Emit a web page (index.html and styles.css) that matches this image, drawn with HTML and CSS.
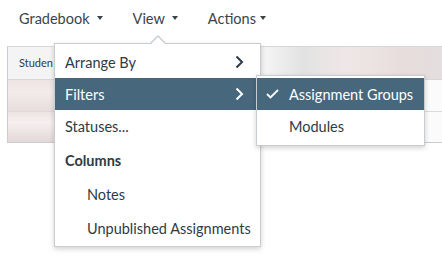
FILE: index.html
```html
<!DOCTYPE html>
<html lang="en">
<head>
    <meta charset="UTF-8">
    <title>Gradebook</title>
    <link rel="stylesheet" href="styles.css">
</head>
<body>
    <div class="page">
        <nav class="toolbar">
            <span class="tool">Gradebook <span class="caret"></span></span>
            <span class="tool">View <span class="caret"></span></span>
            <span class="tool tool-tight">Actions <span class="caret"></span></span>
        </nav>

        <!-- Gradebook grid (blurred behind the menu) -->
        <div class="grid">
            <div class="grid-head">
                <div class="cell-student">Studen</div>
                <div class="cell-blur"></div>
            </div>
            <div class="grid-row">
                <div class="cell-name"></div>
                <div class="cell-rest"></div>
            </div>
            <div class="grid-row">
                <div class="cell-name"></div>
                <div class="cell-rest"></div>
            </div>
        </div>

        <!-- View menu -->
        <div class="menu view-menu">
            <div class="menu-item">Arrange By
                <svg class="chev" width="9" height="14" viewBox="0 0 9 14"><polyline points="1.5,1.5 7,7 1.5,12.5" fill="none" stroke="currentColor" stroke-width="2"/></svg>
            </div>
            <div class="menu-item active">Filters
                <svg class="chev" width="9" height="14" viewBox="0 0 9 14"><polyline points="1.5,1.5 7,7 1.5,12.5" fill="none" stroke="currentColor" stroke-width="2"/></svg>
            </div>
            <div class="menu-item">Statuses...</div>
            <div class="menu-item group-label">Columns</div>
            <div class="menu-item indent">Notes</div>
            <div class="menu-item indent">Unpublished Assignments</div>
        </div>

        <!-- Filters submenu -->
        <div class="menu sub-menu">
            <div class="menu-item active">
                <svg class="check" width="13" height="10" viewBox="0 0 13 10"><polyline points="1,5 4.5,8.5 12,1" fill="none" stroke="currentColor" stroke-width="1.8"/></svg>
                Assignment Groups
            </div>
            <div class="menu-item">Modules</div>
        </div>
    </div>
</body>
</html>
```

FILE: styles.css
```css
* {
    margin: 0;
    padding: 0;
    box-sizing: border-box;
}

body {
    font-family: 'Lato', 'Open Sans', sans-serif;
    color: #2d3b45;
    background: #ffffff;
    width: 442px;
    height: 256px;
    overflow: hidden;
}

.page {
    position: relative;
    height: 256px;
}

/* Top toolbar */
.toolbar {
    display: flex;
    align-items: center;
    height: 46px;
    padding: 0 0 10px 19px;
    font-size: 14.5px;
    color: #3a444c;
    gap: 30px;
}

.tool {
    display: inline-flex;
    align-items: center;
}

.caret {
    display: inline-block;
    margin-left: 7px;
    border-left: 3px solid transparent;
    border-right: 3px solid transparent;
    border-top: 4px solid #3a444c;
}

.tool-tight .caret {
    margin-left: 4px;
}

/* Grid */
.grid {
    margin-left: 7px;
    border-top: 1px solid #d4d8db;
    border-left: 1px solid #c7cdd1;
    border-bottom: 1px solid #c7cdd1;
}

.grid-head {
    display: flex;
    height: 33px;
    border-bottom: 1px solid #d4d8db;
}

.cell-student {
    width: 48px;
    background: #f4f4f4;
    font-size: 11px;
    line-height: 32px;
    padding-left: 11px;
    white-space: nowrap;
    overflow: hidden;
    color: #2d3b45;
}

.cell-blur {
    flex: 1;
    background: linear-gradient(90deg, #e6dcdc 0%, #eee6e6 40%, #f3f3f3 55%, #e2e2e2 64%, #efe7e7 75%, #e8dddd 90%, #e4dede 100%);
}

.grid-row {
    display: flex;
    height: 31px;
}

.grid-row + .grid-row {
    border-top: 1px solid #d9dcde;
}

.cell-name {
    width: 48px;
    background: linear-gradient(180deg, #efe4e4 0%, #f3eaea 40%, #e9dede 100%);
}

.grid-row + .grid-row .cell-name {
    background: linear-gradient(180deg, #eee3e3 0%, #f6efef 35%, #e4d8d8 100%);
}

.cell-rest {
    flex: 1;
    background: #fbfbfb;
}

/* Menus */
.menu {
    position: absolute;
    background: #ffffff;
    border: 1px solid #c7cdd1;
    box-shadow: 0 2px 5px rgba(0, 0, 0, 0.18);
    font-size: 14.5px;
}

.view-menu {
    left: 54px;
    top: 43px;
    width: 207px;
    padding: 2px 0 1px;
}

/* little pointer above the View menu */
.view-menu::before,
.view-menu::after {
    content: "";
    position: absolute;
    left: 95px;
    border-left: 8px solid transparent;
    border-right: 8px solid transparent;
}

.view-menu::before {
    top: -9px;
    border-bottom: 8px solid #c7cdd1;
}

.view-menu::after {
    top: -7px;
    border-bottom: 8px solid #ffffff;
}

.menu-item {
    display: flex;
    align-items: center;
    height: 33px;
    padding: 0 10px;
    white-space: nowrap;
}

.view-menu .menu-item:first-child {
    height: 32px;
}

.menu-item .chev {
    margin-left: auto;
    margin-right: 6px;
}

.menu-item.active {
    background: #46677c;
    color: #ffffff;
    height: 32px;
}

.group-label {
    font-weight: 700;
    height: 34px;
}

.indent {
    padding-left: 32px;
    height: 34px;
}

.sub-menu {
    left: 256px;
    top: 75px;
    width: 169px;
    padding: 2px 0 2px;
}

.sub-menu .menu-item {
    padding-left: 32px;
}

.sub-menu .menu-item.active {
    padding-left: 9px;
}

.check {
    margin-right: 10px;
}
```
